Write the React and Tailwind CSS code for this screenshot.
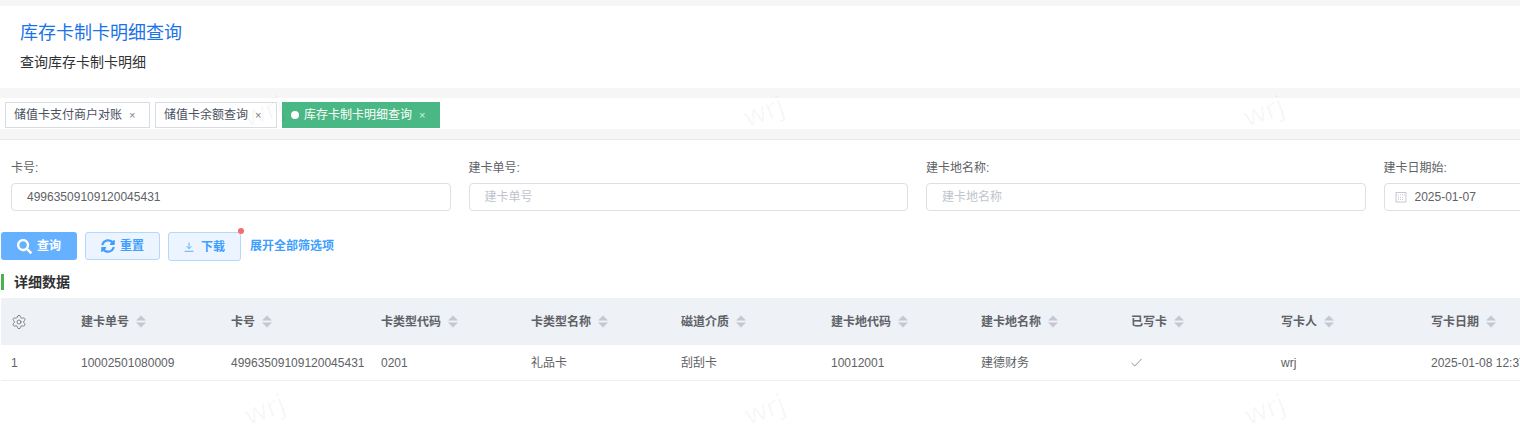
import React from 'react';
import { Settings } from 'lucide-react';
import { FaSearch, FaSyncAlt } from 'react-icons/fa';

const FONT = "font-['Liberation_Sans','Noto_Sans_CJK_SC',sans-serif]";

const columns = ['建卡单号', '卡号', '卡类型代码', '卡类型名称', '磁道介质', '建卡地代码', '建卡地名称', '已写卡', '写卡人', '写卡日期'];
const row = ['10002501080009', '49963509109120045431', '0201', '礼品卡', '刮刮卡', '10012001', '建德财务', null, 'wrj', '2025-01-08 12:37:21'];

const marks = [
  'left-[243px] top-[96px]', 'left-[743px] top-[96px]', 'left-[1243px] top-[96px]',
  'left-[244px] top-[394px]', 'left-[744px] top-[394px]', 'left-[1244px] top-[394px]',
];

const SortIcon = () => (
  <svg width="10" height="13" viewBox="0 0 10 13" className="ml-[7px] shrink-0" fill="#c5c8d0">
    <path d="M5 0.5 L10 5.5 H0 Z" />
    <path d="M5 12.5 L10 7.5 H0 Z" />
  </svg>
);

const Tab = ({ label, className, closeClass, dot }) => (
  <div className={`h-[26px] flex items-center text-xs ${className}`}>
    {dot && <span className="w-2 h-2 rounded-full bg-white mr-[5px]" />}
    <span>{label}</span>
    <span className={`text-[11px] leading-none ${closeClass}`}>×</span>
  </div>
);

const Field = ({ label, value, placeholder, date }) => (
  <div className="w-[457.5px] shrink-0 pr-[18px]">
    <div className="h-4 text-xs leading-4 text-[#606266] mb-[7px]">{label}:</div>
    <div className="w-[439.5px] h-[28px] border border-[#dcdfe6] rounded-[4px] flex items-center text-xs">
      {date && (
        <svg width="12" height="12" viewBox="0 0 12 12" fill="none" stroke="#c8cad3" strokeWidth="1" className="ml-[10px] mr-[8px]">
          <rect x="1" y="1.5" width="10" height="9.5" />
          <path d="M1 4h10M3 6.5h6M3 8.5h6" strokeDasharray="1 1" />
        </svg>
      )}
      {value
        ? <span className={`text-[#606266] ${date ? '' : 'pl-[15px]'}`}>{value}</span>
        : <span className="pl-[15px] text-[#c0c4cc]">{placeholder}</span>}
    </div>
  </div>
);

export default function App() {
  return (
    <div className={`relative w-[1520px] h-[432px] overflow-hidden bg-white ${FONT}`}>
      <div className="h-[6px] bg-[#f6f6f6]" />

      {/* Page title */}
      <div className="h-[82px] px-5 pt-[16px]">
        <div className="text-[18px] leading-[22px] text-[#1a73e8]">库存卡制卡明细查询</div>
        <div className="mt-[8px] text-[14px] leading-[20px] text-[#303133]">查询库存卡制卡明细</div>
      </div>
      <div className="h-[10px] bg-[#f6f6f6]" />

      {/* Tabs */}
      <div className="h-[31px] pl-[5px] pt-[4px] flex items-start">
        <Tab label="储值卡支付商户对账" className="w-[145px] border border-[#d8dce5] pl-[8px] text-[#495060]" closeClass="ml-[7px] text-[#7a7f8a]" />
        <Tab label="储值卡余额查询" className="w-[122px] ml-[5px] border border-[#d8dce5] pl-[8px] text-[#495060]" closeClass="ml-[7px] text-[#7a7f8a]" />
        <Tab label="库存卡制卡明细查询" dot className="w-[158px] ml-[5px] bg-[#4ab884] pl-[9px] text-white" closeClass="ml-[7px] text-[#d5efe2]" />
      </div>
      <div className="h-[10px] bg-[#f6f6f6]" />
      <div className="h-px bg-[#e8e8ec]" />

      {/* Filters */}
      <div className="flex pl-[11px] pt-[20px] overflow-hidden">
        <Field label="卡号" value="49963509109120045431" />
        <Field label="建卡单号" placeholder="建卡单号" />
        <Field label="建卡地名称" placeholder="建卡地名称" />
        <Field label="建卡日期始" value="2025-01-07" date />
      </div>

      {/* Actions */}
      <div className="flex items-start pl-px mt-[21px] h-[29px]">
        <button className="w-[76px] h-[28px] rounded-[3px] bg-[#66b1ff] text-white text-xs font-bold flex items-center justify-center gap-[5px]">
          <FaSearch size={15} />查询
        </button>
        <button className="ml-[8px] w-[75px] h-[28px] rounded-[3px] border border-[#b3d8ff] bg-[#ecf5ff] text-[#409eff] text-xs font-bold flex items-center justify-center gap-[5px]">
          <FaSyncAlt size={14} />重置
        </button>
        <div className="relative ml-[8px]">
          <button className="w-[73px] h-[29px] rounded-[3px] border border-[#b3d8ff] bg-[#ecf5ff] text-[#409eff] text-xs font-bold flex items-center justify-center gap-[7px]">
            <svg width="10" height="10" viewBox="0 0 10 10" fill="none" stroke="#409eff" strokeWidth="0.8">
              <path d="M5 0.5V6.5M2.5 4.2L5 6.7L7.5 4.2M0.5 9.3H9.5" />
            </svg>
            下载
          </button>
          <span className="absolute -top-[4px] -right-[3px] w-[6px] h-[6px] rounded-full bg-[#f56c6c]" />
        </div>
        <span className="ml-[9px] h-[28px] flex items-center text-xs font-bold text-[#409eff]">展开全部筛选项</span>
      </div>

      {/* Section title */}
      <div className="flex items-center mt-[13px] pl-px h-4">
        <span className="w-[3px] h-4 bg-[#4caf50]" />
        <span className="ml-[10px] text-[14px] font-bold text-[#303133]">详细数据</span>
      </div>

      {/* Table */}
      <div className="mt-[8px] ml-px">
        <div className="flex h-[47px] bg-[#eef1f6] items-center text-xs font-bold text-[#606266]">
          <div className="w-[80px] shrink-0 pl-[10px]">
            <Settings size={16} strokeWidth={1} className="text-[#555]" />
          </div>
          {columns.map((col) => (
            <div key={col} className="w-[150px] shrink-0 flex items-center">
              <span>{col}</span>
              <SortIcon />
            </div>
          ))}
        </div>
        <div className="flex h-[36px] border-b border-[#ebeef5] items-center text-xs text-[#606266]">
          <div className="w-[80px] shrink-0 pl-[10px]">1</div>
          {row.map((cell, i) => (
            <div key={i} className="w-[150px] shrink-0 whitespace-nowrap">
              {cell === null ? (
                <svg width="11" height="9" viewBox="0 0 11 9" fill="none" stroke="#777" strokeWidth="0.8">
                  <path d="M0.5 5L3.8 8L10.5 1" />
                </svg>
              ) : cell}
            </div>
          ))}
        </div>
      </div>

      {/* Watermarks */}
      {marks.map((pos) => (
        <span key={pos} className={`absolute ${pos} -rotate-[20deg] text-[28px] leading-none text-black/[0.04] pointer-events-none font-['Noto_Sans',sans-serif]`}>wrj</span>
      ))}
    </div>
  );
}
